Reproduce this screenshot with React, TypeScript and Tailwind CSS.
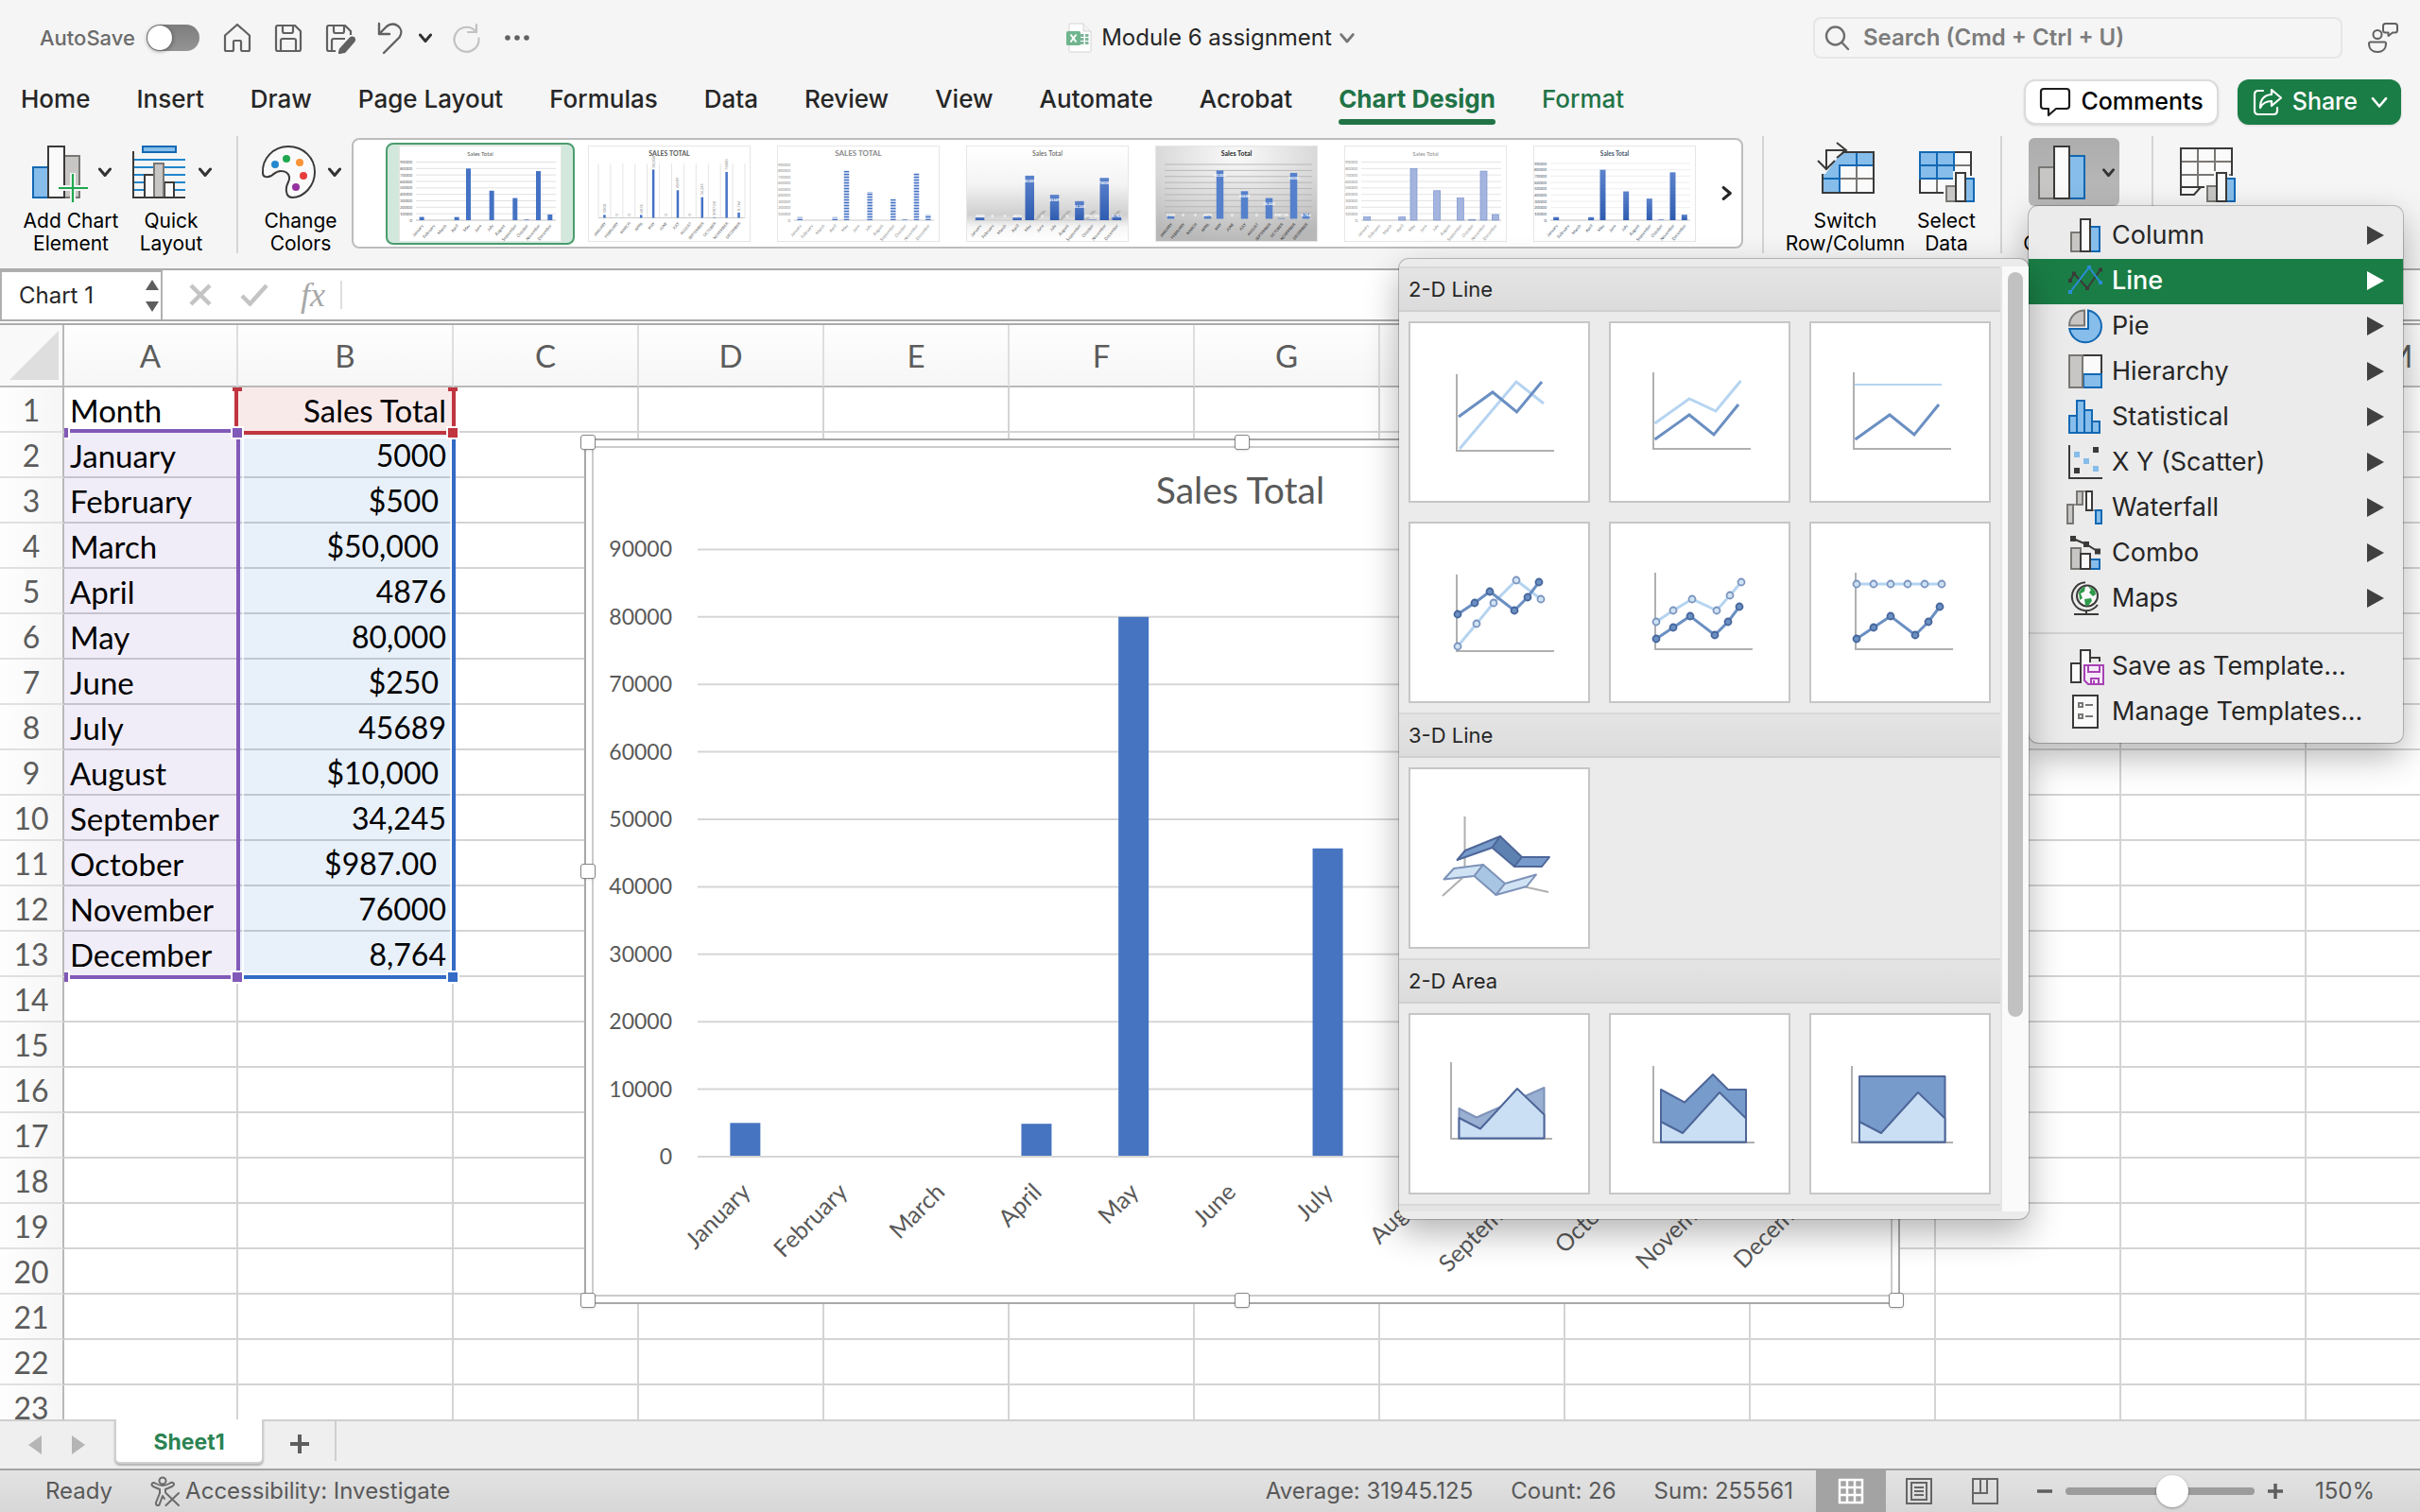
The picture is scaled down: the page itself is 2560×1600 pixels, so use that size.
import { ReactNode, useState } from "react";

const months = [
  "January",
  "February",
  "March",
  "April",
  "May",
  "June",
  "July",
  "August",
  "September",
  "October",
  "November",
  "December",
];

const totals = [
  { text: "5000", pad: "pr-1.5" },
  { text: "$500", pad: "pr-3.5" },
  { text: "$50,000", pad: "pr-3.5" },
  { text: "4876", pad: "pr-1.5" },
  { text: "80,000", pad: "pr-1.5" },
  { text: "$250", pad: "pr-3.5" },
  { text: "45689", pad: "pr-1.5" },
  { text: "$10,000", pad: "pr-3.5" },
  { text: "34,245", pad: "pr-1.5" },
  { text: "$987.00", pad: "pr-4" },
  { text: "76000", pad: "pr-1.5" },
  { text: "8,764", pad: "pr-1.5" },
];

// Text cells count as zero in the chart
const plotted = [5000, 0, 0, 4876, 80000, 0, 45689, 0, 34245, 987, 76000, 8764];

const columns = [
  { name: "A", width: "w-[184px]" },
  { name: "B", width: "w-[228px]" },
  { name: "C", width: "w-[196px]" },
  { name: "D", width: "w-[196px]" },
  { name: "E", width: "w-[196px]" },
  { name: "F", width: "w-[196px]" },
  { name: "G", width: "w-[196px]" },
  { name: "H", width: "w-[196px]" },
  { name: "I", width: "w-[196px]" },
  { name: "J", width: "w-[196px]" },
  { name: "K", width: "w-[196px]" },
  { name: "L", width: "w-[196px]" },
  { name: "M", width: "w-[196px]" },
];

const INK = "#3b3a39";
const BLUE = "#1268b3";
const SKY = "#86bdea";
const GRAY = "#797774";
const SILVER = "#c8c6c4";

function Chevron({ className = "", size = 14, width = 3 }: { className?: string; size?: number; width?: number }) {
  return (
    <svg className={className} width={size} height={size} viewBox="0 0 14 14" fill="none" stroke="currentColor" strokeWidth={width}>
      <path d="M1.5 4 7 10.5 12.5 4" strokeLinejoin="round" strokeLinecap="round" />
    </svg>
  );
}

/* ---------- title bar ---------- */

function IconButton({ label, children, className = "" }: { label: string; children: ReactNode; className?: string }) {
  return (
    <button aria-label={label} className={`flex shrink-0 items-center text-[#616161] ${className}`}>
      {children}
    </button>
  );
}

function TitleBar() {
  const [autoSave, setAutoSave] = useState(false);

  return (
    <div className="grid h-20 grid-cols-[1fr_auto_1fr] items-center">
      <div className="flex items-center pl-[42px]">
        <label className="flex items-center gap-3 text-[22px] font-medium text-[#6b6b6b]">
          AutoSave
          <input
            type="checkbox"
            role="switch"
            checked={autoSave}
            onChange={(e) => setAutoSave(e.target.checked)}
            className="h-7 w-14 appearance-none rounded-full bg-linear-to-b from-[#7d7d7d] to-[#949494] p-px before:block before:size-[26px] before:rounded-full before:bg-white before:shadow-[0_1px_4px_rgba(0,0,0,0.5)]"
          />
        </label>
        <IconButton label="Home" className="ml-6">
          <svg width="32" height="34" viewBox="0 0 32 34" fill="none" stroke="currentColor" strokeWidth="2.2" strokeLinejoin="round">
            <path d="M16 3 3 14.500V29.500Q3 31 4.500 31H10.500Q12 31 12 29.500V21Q12 20 13 20H19Q20 20 20 21V29.500Q20 31 21.500 31H27.500Q29 31 29 29.500V14.500Z" />
          </svg>
        </IconButton>
        <IconButton label="Save" className="ml-[22px]">
          <svg width="32" height="34" viewBox="0 0 32 34" fill="none" stroke="currentColor" strokeWidth="2.200" strokeLinejoin="round">
            <path d="M5 4H23L29 10V29Q29 31 27 31H5Q3 31 3 29V6Q3 4 5 4Z" />
            <path d="M10 4V10Q10 12 12 12H19Q21 12 21 10V4M8 31V20Q8 18 10 18H22Q24 18 24 20V31" />
          </svg>
        </IconButton>
        <IconButton label="Save as" className="ml-[22px]">
          <svg width="34" height="34" viewBox="0 0 34 34" fill="none" stroke="currentColor" strokeWidth="2.200" strokeLinejoin="round">
            <path d="M12 31H5Q3 31 3 29V6Q3 4 5 4H22L28 10V14M10 4V10Q10 12 12 12H19Q21 12 21 10V4M8 31V20Q8 18 10 18H22" />
            <path d="M17 29 27.500 17.500A2.500 2.500 0 0 1 31.500 20.500L21.500 32 16 33Z" fill="currentColor" />
          </svg>
        </IconButton>
        <IconButton label="Undo" className="ml-5">
          <svg width="34" height="36" viewBox="0 0 34 36" fill="none" stroke="currentColor" strokeWidth="2.400" strokeLinecap="round" strokeLinejoin="round">
            <path d="M4 3V14H15M4 14 12 6C20-1 32 8 25.500 17.500L9 34" />
          </svg>
        </IconButton>
        <IconButton label="Undo history" className="ml-3">
          <Chevron className="text-[#333]" />
        </IconButton>
        <IconButton label="Redo" className="ml-5 text-[#c2c2c2]!">
          <svg width="32" height="34" viewBox="0 0 32 34" fill="none" stroke="currentColor" strokeWidth="2.200" strokeLinecap="round" strokeLinejoin="round">
            <path d="M27 3V11H18M27 11A13 13 0 1 0 29.500 17.500" />
          </svg>
        </IconButton>
        <IconButton label="More commands" className="ml-6">
          <svg width="28" height="8" viewBox="0 0 28 8" fill="currentColor">
            <circle cx="4" cy="4" r="2.800" />
            <circle cx="14" cy="4" r="2.800" />
            <circle cx="24" cy="4" r="2.800" />
          </svg>
        </IconButton>
      </div>

      <button className="flex items-center gap-2 text-[24px] text-[#262626]">
        <svg width="30" height="32" viewBox="0 0 30 32">
          <path d="M4 1H19L27 9V30Q27 31 26 31H5Q4 31 4 30Z" fill="#fff" stroke="#d4d4d4" />
          <path d="M19 1V9H27" fill="#f2f2f2" stroke="#d4d4d4" />
          <g fill="#7fb79a">
            <rect x="16" y="12" width="3.500" height="3" />
            <rect x="21" y="12" width="3.500" height="3" />
            <rect x="16" y="16" width="3.500" height="3" />
            <rect x="21" y="16" width="3.500" height="3" />
            <rect x="16" y="20" width="3.500" height="3" />
            <rect x="21" y="20" width="3.500" height="3" />
          </g>
          <rect x="1" y="9" width="15" height="15" rx="1.500" fill="#6fb58e" />
          <path d="M5.500 12.500 11.500 20.500M11.500 12.500 5.500 20.500" stroke="#fff" strokeWidth="2" />
        </svg>
        Module 6 assignment
        <Chevron className="text-[#777]" size={16} width={2.5} />
      </button>

      <div className="flex items-center justify-end gap-[26px] pr-[22px]">
        <label className="flex h-11 w-[560px] items-center gap-3.5 rounded-lg border-2 border-[#e6e6e6] px-2.5">
          <svg width="27" height="28" viewBox="0 0 27 28" fill="none" stroke="#6f6f6f" strokeWidth="2.400" strokeLinecap="round">
            <circle cx="11.500" cy="12" r="9.500" />
            <path d="M18.500 19 25 26" />
          </svg>
          <input
            type="search"
            aria-label="Search"
            placeholder="Search (Cmd + Ctrl + U)"
            className="min-w-0 flex-1 bg-transparent text-[24px] font-semibold outline-none placeholder:text-[#7c7c7c]"
          />
        </label>
        <IconButton label="Account">
          <svg width="34" height="34" viewBox="0 0 34 34" fill="none" stroke="currentColor" strokeWidth="2" strokeLinejoin="round">
            <circle cx="11" cy="13.500" r="4.500" />
            <path d="M3.500 21.500H18.500Q20 21.500 20 23C20 29 16 32 11 32S2 29 2 23Q2 21.500 3.500 21.500Z" />
            <path d="M19.500 2H29.500Q32 2 32 4.500V9Q32 11.500 29.500 11.500H27L22.500 15V11.500H19.500Q17 11.500 17 9V4.500Q17 2 19.500 2Z" />
          </svg>
        </IconButton>
      </div>
    </div>
  );
}

/* ---------- ribbon tabs ---------- */

const tabs = [
  "Home",
  "Insert",
  "Draw",
  "Page Layout",
  "Formulas",
  "Data",
  "Review",
  "View",
  "Automate",
  "Acrobat",
];

function TabRow() {
  return (
    <div className="flex h-[60px] items-start justify-between pr-5 pl-[22px]">
      <nav className="flex gap-[49px] pt-2.5 text-[26px] leading-[30px] font-medium text-[#262626]">
        {tabs.map((tab) => (
          <a key={tab} href="#" className="whitespace-nowrap">
            {tab}
          </a>
        ))}
        <a href="#" aria-current="page" className="font-bold whitespace-nowrap text-[#217346]">
          Chart Design
          <span className="mt-1.5 block h-1.5 rounded-full bg-[#217346]" />
        </a>
        <a href="#" className="whitespace-nowrap text-[#217346]">
          Format
        </a>
      </nav>
      <div className="flex gap-5 pt-1 text-[25px] font-medium">
        <button className="flex h-12 items-center gap-2.5 rounded-xl border-2 border-[#dcdcdc] bg-white px-3.5 text-black shadow-sm">
          <svg width="34" height="32" viewBox="0 0 34 32" fill="none" stroke="#1d1d1d" strokeWidth="2.200" strokeLinejoin="round">
            <path d="M5 2H29Q32 2 32 5V20Q32 23 29 23H18L10 30V23H5Q2 23 2 20V5Q2 2 5 2Z" />
          </svg>
          Comments
        </button>
        <button className="flex h-12 items-center gap-2.5 rounded-xl bg-[#1a7d45] px-3.5 text-white shadow-sm">
          <svg width="34" height="32" viewBox="0 0 34 32" fill="none" stroke="#fff" strokeWidth="2.200" strokeLinecap="round" strokeLinejoin="round">
            <path d="M13 4H8Q4 4 4 8V25Q4 29 8 29H24Q28 29 28 25V22" />
            <path d="M22 3 32 11.500 22 20V15C16 15 12.500 17 10 22 10 13 14 8.500 22 8Z" />
          </svg>
          Share
          <Chevron className="ml-1" size={18} width={2} />
        </button>
      </div>
    </div>
  );
}

/* ---------- chart style thumbnails ---------- */

type ThumbStyle = {
  title: string;
  size: number;
  weight: number;
  ink: string;
  bar: string;
  barWidth: number;
  left: number;
  top: number;
  base: number;
  axis?: boolean;
  grid?: string;
  vertical?: boolean;
  values?: string;
  edge?: string;
  bg?: string;
  caps?: boolean;
  shadow?: boolean;
};

const thumbs: ThumbStyle[] = [
  { title: "Sales Total", size: 6, weight: 400, ink: "#595959", bar: "#4472c4", barWidth: 5, left: 18, top: 17.5, base: 79, axis: true, grid: "#dedede" },
  { title: "SALES TOTAL", size: 7, weight: 700, ink: "#595959", bar: "#4472c4", barWidth: 2.5, left: 11, top: 19, base: 76.5, vertical: true, values: "#8a8a8a", caps: true },
  { title: "SALES TOTAL", size: 8, weight: 700, ink: "#8a8a8a", bar: "url(#stripes)", barWidth: 5.5, left: 18, top: 20, base: 79, axis: true },
  { title: "Sales Total", size: 7, weight: 400, ink: "#595959", bar: "url(#deepBar)", barWidth: 9.5, left: 8, top: 26, base: 79, values: "#ffffff", bg: "url(#floor)", shadow: true },
  { title: "Sales Total", size: 7, weight: 700, ink: "#262626", bar: "#5580cb", barWidth: 7.5, left: 10, top: 20, base: 77.5, grid: "#b3b3b3", values: "#ffffff", bg: "url(#spot)", caps: true },
  { title: "Sales Total", size: 6, weight: 400, ink: "#8c8c8c", bar: "#a3b4de", edge: "#7b94cf", barWidth: 7, left: 18, top: 17.5, base: 79, axis: true, grid: "#e2e2e2" },
  { title: "Sales Total", size: 6.5, weight: 700, ink: "#44546a", bar: "url(#deepBar)", barWidth: 6, left: 18, top: 19, base: 79, axis: true, grid: "#ececf2" },
];

const valueLabels = ["5000", "0", "0", "4876", "80,000", "0", "45689", "0", "34,245", "$987.00", "76000", "8,764"];

function Thumb({ style: s }: { style: ThumbStyle }) {
  const right = 166;
  const step = (right - s.left) / 12;
  const unit = (s.base - s.top) / 90000;
  const lines = Array.from({ length: 10 }, (_, i) => s.top + ((s.base - s.top) / 9) * i);

  return (
    <svg width="172" height="102" viewBox="0 0 172 102" fontFamily="Lato, sans-serif">
      <defs>
        <pattern id="stripes" width="4" height="3" patternUnits="userSpaceOnUse">
          <rect width="4" height="1.500" fill="#4472c4" />
          <rect y="1.500" width="4" height="1.500" fill="#c3d0ec" />
        </pattern>
        <linearGradient id="deepBar" x2="0" y2="1">
          <stop offset="0" stopColor="#5b82cc" />
          <stop offset="1" stopColor="#2f5cb0" />
        </linearGradient>
        <linearGradient id="floor" x2="0" y2="1">
          <stop offset="0" stopColor="#fff" />
          <stop offset="0.400" stopColor="#f4f4f4" />
          <stop offset="0.720" stopColor="#cfcfcf" />
          <stop offset="0.850" stopColor="#f6f6f6" />
          <stop offset="1" stopColor="#fff" />
        </linearGradient>
        <radialGradient id="spot" cx="0.500" cy="0.100" r="0.900">
          <stop offset="0" stopColor="#fafafa" />
          <stop offset="0.600" stopColor="#d6d6d6" />
          <stop offset="1" stopColor="#b8b8b8" />
        </radialGradient>
      </defs>
      <rect x="0.500" y="0.500" width="171" height="101" fill={s.bg ?? "#fff"} stroke="#e6e6e6" />
      <text x="86" y="11" textAnchor="middle" fontSize={s.size} fontWeight={s.weight} fill={s.ink}>
        {s.title}
      </text>
      {s.grid && lines.map((y) => <path key={y} d={`M${s.left} ${y}H${right}`} stroke={s.grid} strokeWidth="0.900" />)}
      {s.vertical &&
        Array.from({ length: 13 }, (_, i) => (
          <path key={i} d={`M${s.left + step * i} ${s.top}V${s.base}`} stroke="#dedede" strokeWidth="0.800" />
        ))}
      <path d={`M${s.left} ${s.base}H${right}`} stroke="#c9c9c9" strokeWidth="1" />
      {s.axis &&
        lines.map((y, i) => (
          <text key={y} x={s.left - 4} y={y + 1.5} textAnchor="end" fontSize="4.500" fill={s.ink}>
            {i === 9 ? "0" : `${9 - i}0000`}
          </text>
        ))}
      {plotted.map((value, i) => {
        const x = s.left + step * (i + 0.5);
        const y = s.base - value * unit;
        return (
          <g key={months[i]}>
            {s.shadow && value > 30000 && <path d={`M${x + 4} ${s.base}l10-10h4l-10 10Z`} fill="#8d8d8d" opacity="0.400" />}
            <rect x={x - s.barWidth / 2} y={y} width={s.barWidth} height={s.base - y} fill={s.bar} stroke={s.edge} strokeWidth="0.700" />
            {s.values && s.vertical && (
              <text transform={`translate(${x + 1.5} ${y - 2}) rotate(-90)`} fontSize="4" fill={s.values}>
                {valueLabels[i]}
              </text>
            )}
            {s.values && !s.vertical && (
              <text x={x} y={value > 10000 ? y + 7 : s.base - 3} textAnchor="middle" fontSize="4" fontWeight="700" fill={s.values}>
                {valueLabels[i]}
              </text>
            )}
            <text transform={`translate(${x + 2} ${s.base + 6}) rotate(-50)`} textAnchor="end" fontSize={s.caps ? 4 : 4.5} fill={s.ink}>
              {s.caps ? months[i].toUpperCase() : months[i]}
            </text>
          </g>
        );
      })}
    </svg>
  );
}

function StyleGallery() {
  return (
    <div className="mt-1.5 flex h-[117px] min-w-0 flex-1 items-center justify-between rounded-lg border-2 border-[#bdbdbd] bg-white pl-[34px]">
      <div className="flex min-w-0 overflow-hidden">
        {thumbs.map((style, i) => (
          <button
            key={i}
            aria-label={`Style ${i + 1}`}
            className={`flex h-[108px] w-[200px] shrink-0 items-center justify-center rounded-lg ${
              i === 0 ? "border-2 border-[#4a9d6e] bg-[#d3e8dc]" : ""
            }`}
          >
            <Thumb style={style} />
          </button>
        ))}
      </div>
      <button aria-label="More styles" className="px-2 text-[#262626]">
        <Chevron className="-rotate-90" size={15} width={3} />
      </button>
    </div>
  );
}

/* ---------- chart type menu ---------- */

function MenuIcon({ children }: { children: ReactNode }) {
  return (
    <svg className="shrink-0 overflow-visible" width="36" height="36" viewBox="0 0 36 36" fill="none" strokeWidth="2">
      {children}
    </svg>
  );
}

function Squares({ points, size, fill }: { points: number[][]; size: number; fill: string }) {
  return points.map(([x, y]) => <rect key={`${x},${y}`} x={x - size / 2} y={y - size / 2} width={size} height={size} fill={fill} />);
}

const chartTypes: { name: string; icon: ReactNode }[] = [
  {
    name: "Column",
    icon: (
      <>
        <rect x="3" y="15" width="10" height="20" fill={SILVER} stroke={GRAY} />
        <rect x="23" y="9" width="10" height="26" fill={SKY} stroke={BLUE} />
        <rect x="13" y="1" width="10" height="34" fill="#fafafa" stroke={INK} />
      </>
    ),
  },
  {
    name: "Line",
    icon: (
      <>
        <path d="M2 18 6 10.500 20 26 34 6.500" stroke={INK} />
        <path d="M2 30 22 4 34 20" stroke="#2a8dd4" />
        <Squares points={[[2, 18], [6, 10.5], [20, 26], [34, 6.5]]} size={4} fill={INK} />
        <Squares points={[[2, 30], [22, 4], [34, 20]]} size={4} fill="#2a8dd4" />
      </>
    ),
  },
  {
    name: "Pie",
    icon: (
      <>
        <path d="M17 1.500V17.500H1C1 8.500 8 1.500 17 1.500Z" fill={SILVER} stroke={GRAY} />
        <path d="M21 1.500A17 17 0 1 1 1.200 21H21Z" fill={SKY} stroke={BLUE} />
      </>
    ),
  },
  {
    name: "Hierarchy",
    icon: (
      <>
        <rect x="15" y="1" width="20" height="34" fill="#fafafa" stroke={INK} />
        <rect x="16" y="21" width="19" height="14" fill={SKY} stroke={BLUE} />
        <rect x="1" y="1" width="14" height="34" fill={SILVER} stroke={GRAY} />
      </>
    ),
  },
  {
    name: "Statistical",
    icon: (
      <g fill={SKY} stroke={BLUE}>
        <rect x="1" y="17" width="8" height="18" />
        <rect x="9" y="1" width="8" height="34" />
        <rect x="17" y="11" width="8" height="24" />
        <rect x="25" y="23" width="8" height="12" />
      </g>
    ),
  },
  {
    name: "X Y (Scatter)",
    icon: (
      <>
        <path d="M1 0V35H36" stroke={INK} />
        <Squares points={[[9, 10], [19, 17], [29, 25]]} size={6} fill={SKY} />
        <Squares points={[[29, 5], [9, 27]]} size={6} fill={INK} />
      </>
    ),
  },
  {
    name: "Waterfall",
    icon: (
      <>
        <path d="M5 15H9M25 21H29M15 1H19" stroke={INK} strokeWidth="1" />
        <rect x="-1" y="15" width="6" height="20" fill={SILVER} stroke={GRAY} />
        <rect x="9" y="1" width="6" height="14" fill={SILVER} stroke={GRAY} />
        <rect x="19" y="1" width="6" height="20" fill="#fafafa" stroke={INK} />
        <rect x="29" y="21" width="6" height="14" fill={SKY} stroke={BLUE} />
      </>
    ),
  },
  {
    name: "Combo",
    icon: (
      <>
        <rect x="3" y="13" width="10" height="22" fill={SILVER} stroke={GRAY} />
        <rect x="23" y="25" width="10" height="10" fill={SKY} stroke={BLUE} />
        <rect x="13" y="19" width="10" height="16" fill="#fafafa" stroke={INK} />
        <path d="M5 3 19 9 31 16.500" stroke={INK} />
        <Squares points={[[5, 3], [19, 9], [31, 16.5]]} size={6} fill={INK} />
      </>
    ),
  },
  {
    name: "Maps",
    icon: (
      <>
        <circle cx="20" cy="15.500" r="11" fill="#fafafa" stroke={INK} />
        <path d="M11 12Q14 6 18 6L17 11 13 13 15 18 12 20ZM21 6Q28 6 29 14L26 16 22 12 24 9ZM17 19 24 18 25 21 21 26H18Z" fill="#2f9a4b" />
        <path d="M18 1.200A15 15 0 1 0 31 25M19 31V35M6 35H32" stroke={INK} />
      </>
    ),
  },
];

const templateItems: { name: string; icon: ReactNode }[] = [
  {
    name: "Save as Template...",
    icon: (
      <>
        <rect x="3" y="15" width="10" height="20" fill="#fafafa" stroke={INK} />
        <path d="M13 35V1H23V14M23 9H33V13" fill="none" stroke={INK} />
        <rect x="14" y="2" width="8" height="14" fill="#fafafa" />
        <path d="M17 17H37V37H21L17 33Z" fill="#f6eaf8" stroke="#a742b5" />
        <path d="M21 17V24H33V17M24 37V31H32V37M27 33V36" stroke="#a742b5" />
      </>
    ),
  },
  {
    name: "Manage Templates...",
    icon: (
      <>
        <rect x="5" y="1" width="26" height="34" fill="#fafafa" stroke={INK} />
        <path d="M11 9H15V13H11ZM11 21H15V25H11ZM18 11H26M18 23H26" stroke={GRAY} />
      </>
    ),
  },
];

const DARK_LINE = "#6a8fc2";
const PALE_LINE = "#b5d4f1";
const EDGE = "#4e6699";

function Axis({ x, top, bottom, right }: { x: number; top: number; bottom: number; right: number }) {
  return <path d={`M${x} ${top}V${bottom}H${right}`} stroke="#b0b0b0" strokeWidth="2" />;
}

function Series({ points, tone, dots = false }: { points: number[][]; tone: "dark" | "pale"; dots?: boolean }) {
  const line = points.map((p) => p.join(",")).join(" ");
  return (
    <g>
      <polyline points={line} stroke={tone === "dark" ? DARK_LINE : PALE_LINE} strokeWidth="3" />
      {dots &&
        points.map(([x, y]) => (
          <circle key={x} cx={x} cy={y} r="3.500" fill={tone === "dark" ? DARK_LINE : "#cfe3f6"} stroke={tone === "dark" ? "#46669c" : "#7b94bd"} strokeWidth="1.800" />
        ))}
    </g>
  );
}

const lowLine = [[48.5, 125], [85, 99], [111, 120], [137, 88]];
const lowDots = [[50, 124], [68, 112], [86, 100], [112, 120], [126, 106], [138, 90]];

const sections: { title: string; tiles: { name: string; art: ReactNode }[] }[] = [
  {
    title: "2-D Line",
    tiles: [
      {
        name: "Line",
        art: (
          <>
            <Axis x={51} top={56} bottom={137} right={154} />
            <Series tone="pale" points={[[54, 135], [114, 64], [143, 87]]} />
            <Series tone="dark" points={[[53, 101], [89, 75], [114.5, 96], [141, 64]]} />
          </>
        ),
      },
      {
        name: "Stacked line",
        art: (
          <>
            <Axis x={47} top={54} bottom={135} right={150} />
            <Series tone="pale" points={[[48.5, 108], [85, 82], [113, 95], [139.5, 63]]} />
            <Series tone="dark" points={lowLine} />
          </>
        ),
      },
      {
        name: "100% stacked line",
        art: (
          <>
            <Axis x={47} top={54} bottom={135} right={150} />
            <path d="M48 67H140" stroke={PALE_LINE} strokeWidth="2" />
            <Series tone="dark" points={lowLine} />
          </>
        ),
      },
      {
        name: "Line with markers",
        art: (
          <>
            <Axis x={51} top={56} bottom={137} right={154} />
            <Series dots tone="pale" points={[[52, 132], [72, 108], [90, 86], [114, 62], [140, 82]]} />
            <Series dots tone="dark" points={[[52, 98], [70, 86], [86, 74], [112, 94], [126, 80], [138, 64]]} />
          </>
        ),
      },
      {
        name: "Stacked line with markers",
        art: (
          <>
            <Axis x={49} top={54} bottom={135} right={152} />
            <Series dots tone="pale" points={[[50, 106], [68, 94], [88, 82], [114, 94], [128, 78], [140, 64]]} />
            <Series dots tone="dark" points={lowDots} />
          </>
        ),
      },
      {
        name: "100% stacked line with markers",
        art: (
          <>
            <Axis x={49} top={54} bottom={135} right={152} />
            <Series dots tone="pale" points={[[50, 66], [68, 66], [86, 66], [104, 66], [122, 66], [140, 66]]} />
            <Series dots tone="dark" points={lowDots} />
          </>
        ),
      },
    ],
  },
  {
    title: "3-D Line",
    tiles: [
      {
        name: "3-D line",
        art: (
          <g strokeWidth="2" strokeLinejoin="round">
            <path d="M59.500 52V106M57 117 36 136M121 126 148 132" stroke="#b0b0b0" />
            <path d="M51.500 98 60 88 97 73 88.500 85Z" fill="#779bca" stroke={EDGE} />
            <path d="M97 73 120 95 112 105 88.500 85Z" fill="#5d82b1" stroke={EDGE} />
            <path d="M120 95H149L141 105H112Z" fill="#779bca" stroke={EDGE} />
            <path d="M37.500 118.500 48 107 79 103 69.500 115Z" fill="#d0e3f4" stroke="#7d92b8" />
            <path d="M79 103 102 123 92.500 135 69.500 115Z" fill="#a9c5e4" stroke="#7d92b8" />
            <path d="M102 123 135 113.500 125 126 92.500 135Z" fill="#d0e3f4" stroke="#7d92b8" />
          </g>
        ),
      },
    ],
  },
  {
    title: "2-D Area",
    tiles: [
      {
        name: "Area",
        art: (
          <g strokeWidth="2" strokeLinejoin="round">
            <Axis x={45} top={52} bottom={133} right={152} />
            <path d="M53.500 101 72 110.500 97 99.500 143.500 79V132.500H53.500Z" fill="#9ab0d2" stroke="#7d92b8" />
            <path d="M53.500 111 76 122.500 115 80 143.500 107.500V132.500H53.500Z" fill="#cbdff4" stroke={EDGE} />
          </g>
        ),
      },
      {
        name: "Stacked area",
        art: (
          <g strokeWidth="2" strokeLinejoin="round">
            <Axis x={47} top={56} bottom={137} right={154} />
            <path d="M55 81 80 94.500 110 65 126 81H145V136.500H55Z" fill="#779bca" stroke={EDGE} />
            <path d="M55 115 78 127 117 84 145 111.500V136.500H55Z" fill="#cbdff4" stroke={EDGE} />
          </g>
        ),
      },
      {
        name: "100% stacked area",
        art: (
          <g strokeWidth="2" strokeLinejoin="round">
            <Axis x={45} top={56} bottom={137} right={152} />
            <path d="M53 67H143.500V136.500H53Z" fill="#779bca" stroke={EDGE} />
            <path d="M53 115 76 127 115 84 143.500 111.500V136.500H53Z" fill="#cbdff4" stroke={EDGE} />
          </g>
        ),
      },
    ],
  },
];

function LineGallery() {
  return (
    <div className="absolute top-0 right-full flex h-[1016px] w-[666px] rounded-[10px] bg-[#ebebeb] py-2 shadow-[0_0_0_1px_rgba(0,0,0,0.22),0_14px_36px_rgba(0,0,0,0.3)]">
      <div className="min-w-0 flex-1 overflow-hidden">
        {sections.map((section) => (
          <section key={section.title}>
            <h3 className="flex h-12 items-center border-y-2 border-t-[#d8d8d8] border-b-[#cfcfcf] bg-linear-to-b from-[#e4e4e4] to-[#dcdcdc] px-2.5 text-[22px] font-normal text-[#262626]">
              {section.title}
            </h3>
            <div className="grid grid-cols-3 gap-5 p-2.5">
              {section.tiles.map((tile) => (
                <button key={tile.name} aria-label={tile.name} className="aspect-square border-2 border-[#c6c6c6] bg-white">
                  <svg className="size-full" viewBox="2 2 188 188" fill="none">
                    {tile.art}
                  </svg>
                </button>
              ))}
            </div>
          </section>
        ))}
        <div className="h-12 border-t-2 border-[#d8d8d8] bg-[#e4e4e4]" />
      </div>
      <div className="w-[30px] border-l-2 border-[#e4e4e4] bg-[#fafafa] py-1.5 pl-1.5">
        <div className="h-[788px] w-4 rounded-full bg-[#c1c1c1]" />
      </div>
    </div>
  );
}

function ChartTypeMenu() {
  return (
    <div className="absolute top-full left-0 w-[396px] rounded-[10px] bg-[#ebebeb] py-2 text-[27px] text-[#262626] shadow-[0_0_0_1px_rgba(0,0,0,0.22),0_14px_36px_rgba(0,0,0,0.3)]">
      {chartTypes.map((type) => {
        const active = type.name === "Line";
        return (
          <div key={type.name} className="relative">
            <button
              className={`flex h-12 w-full items-center gap-2.5 pr-5 pb-0.5 pl-[42px] text-left ${
                active ? "bg-[#1a7d45] font-medium text-white" : ""
              }`}
            >
              <MenuIcon>{type.icon}</MenuIcon>
              <span className="flex-1">{type.name}</span>
              <svg width="18" height="20" viewBox="0 0 18 20" className={active ? "fill-white" : "fill-[#404040]"}>
                <path d="M0 0 18 10 0 20Z" />
              </svg>
            </button>
            {active && <LineGallery />}
          </div>
        );
      })}
      <hr className="my-[11px] border-t-2 border-[#d2d2d2]" />
      {templateItems.map((item) => (
        <button key={item.name} className="flex h-12 w-full items-center gap-2.5 pb-0.5 pl-[42px] text-left">
          <MenuIcon>{item.icon}</MenuIcon>
          {item.name}
        </button>
      ))}
    </div>
  );
}

/* ---------- ribbon ---------- */

function RibbonButton({ icon, lines, arrow = false, className = "" }: { icon: ReactNode; lines: string[]; arrow?: boolean; className?: string }) {
  return (
    <button className={`flex shrink-0 flex-col items-center pt-2.5 text-[21px] leading-6 text-black ${className}`}>
      <span className="mb-2 flex h-16 items-center gap-2.5">
        <svg width="62" height="64" viewBox="0 0 62 64" fill="none" strokeWidth="2">
          {icon}
        </svg>
        {arrow && <Chevron className="text-[#333]" />}
      </span>
      {lines.map((line) => (
        <span key={line} className="block whitespace-nowrap">
          {line}
        </span>
      ))}
    </button>
  );
}

function Separator({ className = "" }: { className?: string }) {
  return <div className={`mt-1 h-[124px] w-0.5 shrink-0 bg-[#d4d4d4] ${className}`} />;
}

function SmallBars() {
  return (
    <>
      <path d="M28 44H38V31H54V36H62V64H28Z" fill="#f5f5f5" />
      <rect x="31" y="47" width="10" height="16" fill={SILVER} stroke={GRAY} />
      <rect x="51" y="39" width="9" height="24" fill={SKY} stroke={BLUE} />
      <rect x="41" y="33" width="10" height="30" fill="#fafafa" stroke={INK} />
    </>
  );
}

function Ribbon() {
  return (
    <div className="relative z-10 flex h-36 items-start pl-[22px]">
      <RibbonButton
        arrow
        className="w-[106px]"
        lines={["Add Chart", "Element"]}
        icon={
          <>
            <rect x="3" y="27" width="16" height="32" fill={SKY} stroke={BLUE} />
            <rect x="36" y="15" width="16" height="44" fill={SILVER} stroke={GRAY} />
            <rect x="19" y="5" width="17" height="54" fill="#fafafa" stroke={INK} />
            <path d="M45 33V64M29 49H61" stroke="#f5f5f5" strokeWidth="6" />
            <path d="M45 34V64M30 49H61" stroke="#1fa84f" strokeWidth="2.200" />
          </>
        }
      />
      <RibbonButton
        arrow
        className="w-[106px]"
        lines={["Quick", "Layout"]}
        icon={
          <>
            <rect x="13" y="5" width="35" height="6" fill={SKY} stroke={BLUE} />
            <path d="M4 19H58M4 27H58M4 35H58M4 43H58M4 51H58" stroke="#1f86cc" />
            <rect x="15" y="35" width="10" height="24" fill="#fafafa" stroke={INK} />
            <rect x="36" y="43" width="10" height="16" fill="#fafafa" stroke={INK} />
            <rect x="25" y="23" width="10" height="36" fill={SILVER} stroke={GRAY} />
            <path d="M3 10V59H58" stroke={INK} />
          </>
        }
      />
      <Separator className="ml-4" />
      <RibbonButton
        arrow
        className="ml-3 w-[108px]"
        lines={["Change", "Colors"]}
        icon={
          <>
            <path d="M3 33C2 18 14 5 30 5 46 5 58 17 58 32 58 46 47 59 34 59 29 59 27 54 28 48 29 43 32 41 31 37 30 33 26 31 22 31 17 31 15 34 12 36 8 38 3 38 3 33Z" fill="#fafafa" stroke={INK} />
            <circle cx="16" cy="24" r="4" fill="#2488cc" />
            <circle cx="28" cy="18" r="4" fill="#1fa84f" />
            <circle cx="42" cy="22" r="4" fill="#fb9438" />
            <circle cx="46" cy="36" r="4" fill="#e83c3c" />
            <circle cx="38" cy="48" r="4" fill="#96309e" />
          </>
        }
      />
      <StyleGallery />
      <Separator className="ml-5" />
      <RibbonButton
        className="ml-6 w-[124px]"
        lines={["Switch", "Row/Column"]}
        icon={
          <>
            <rect x="7" y="11" width="54" height="43" fill="#fafafa" />
            <rect x="7" y="11" width="54" height="14" fill={SKY} />
            <rect x="7" y="11" width="18" height="43" fill={SKY} />
            <path d="M43 25V54M25 39H61" stroke={GRAY} />
            <path d="M43 11V25M7 39H25M25 54V25H61" stroke={BLUE} />
            <path d="M7 11H61V54H7Z" stroke={INK} />
            <path d="M0 0H36L10 34H0Z" fill="#f5f5f5" />
            <path d="M11 28V9H31M22 1 32 9 22 17M2 20 11 29 20 20" stroke={INK} />
          </>
        }
      />
      <RibbonButton
        className="w-[90px]"
        lines={["Select", "Data"]}
        icon={
          <>
            <rect x="3" y="11" width="54" height="43" fill="#fafafa" />
            <path d="M39 25H57M21 39V54" stroke={GRAY} />
            <path d="M3 11H57V54H3Z" stroke={INK} />
            <rect x="3" y="11" width="36" height="28" fill={SKY} stroke={BLUE} />
            <path d="M21 11V39M3 25H39" stroke={BLUE} />
            <SmallBars />
          </>
        }
      />
      <Separator className="ml-3" />
      <div className="relative ml-7 w-[98px] shrink-0 pt-1.5">
        <div className="relative">
          <button
            aria-haspopup="menu"
            aria-expanded="true"
            aria-label="Change chart type"
            className="flex h-[72px] w-24 items-center gap-4 rounded-md bg-linear-to-b from-[#adadad] to-[#bababa] pl-2.5"
          >
            <svg width="52" height="58" viewBox="0 0 52 58" fill="none" strokeWidth="2">
              <rect x="1" y="24" width="16" height="33" fill={SILVER} stroke={GRAY} />
              <rect x="33" y="12" width="16" height="45" fill={SKY} stroke={BLUE} />
              <rect x="17" y="2" width="16" height="55" fill="#fafafa" stroke={INK} />
            </svg>
            <Chevron className="text-[#333]" size={13} />
          </button>
          <ChartTypeMenu />
        </div>
        <div className="-mx-2 mt-1 text-center text-[21px] leading-6 whitespace-nowrap text-black">
          Change
          <br />
          Chart Type
        </div>
      </div>
      <Separator className="ml-8" />
      <button aria-label="Move chart" className="mr-[194px] ml-[26px] shrink-0 pt-2.5">
        <svg width="62" height="64" viewBox="0 0 62 64" fill="none" strokeWidth="2">
          <path d="M3 7H57V48H24L18 56H3Z" fill="#fafafa" />
          <path d="M21 7V48M39 7V48M3 21H57M3 35H57" stroke={GRAY} />
          <path d="M57 48V7H3V56H17L24 48M3 48H32" stroke={INK} />
          <SmallBars />
        </svg>
      </button>
    </div>
  );
}

/* ---------- formula bar ---------- */

function FormulaBar() {
  return (
    <div className="flex h-[60px] border-t-2 border-b-[6px] border-double border-[#ababab] bg-white text-[#c4c4c4]">
      <div className="flex h-full w-[172px] items-center border-2 border-b-0 border-[#b0b0b0] pr-0.5 pl-[18px]">
        <input aria-label="Name box" defaultValue="Chart 1" className="w-full min-w-0 text-[24px] text-[#262626] outline-none" />
        <svg className="shrink-0" width="14" height="36" viewBox="0 0 14 36" fill="#5e5e5e">
          <path d="M7 1 14 12H0ZM7 35 14 24H0Z" />
        </svg>
      </div>
      <div className="flex flex-1 items-center pl-7">
        <button aria-label="Cancel">
          <svg width="24" height="24" viewBox="0 0 24 24" stroke="currentColor" strokeWidth="4.500">
            <path d="M2 2 22 22M22 2 2 22" />
          </svg>
        </button>
        <button aria-label="Enter" className="ml-[30px]">
          <svg width="30" height="24" viewBox="0 0 30 24" fill="none" stroke="currentColor" strokeWidth="4.500">
            <path d="M2 13 10.500 21.500 28 2" />
          </svg>
        </button>
        <button aria-label="Insert function" className="ml-[34px] font-[family-name:'Liberation_Serif',serif] text-[36px] leading-8 text-[#a8a8a8] italic">
          fx
        </button>
        <div className="ml-4 h-[30px] w-0.5 bg-[#dedede]" />
        <input aria-label="Formula" className="h-full min-w-0 flex-1 px-3 text-[24px] text-black outline-none" />
      </div>
    </div>
  );
}

/* ---------- sheet ---------- */

function BigChart() {
  const left = 120;
  const base = 760;
  const step = 102.7;
  const rise = 71.4;

  return (
    <div className="absolute top-[120px] left-[618px] h-[916px] w-[1392px] border-2 border-[#a8a8a8] bg-white p-1.5">
      <div className="size-full border-2 border-[#cbcbcb]" />
      <svg className="absolute -top-0.5 -left-0.5" width="1392" height="916" viewBox="0 0 1392 916" fontFamily="Lato, sans-serif" fill="#595959">
        <text x="694" y="69" textAnchor="middle" fontSize="39">
          Sales Total
        </text>
        {Array.from({ length: 10 }, (_, i) => (
          <g key={i}>
            <path d={`M${left} ${base - rise * i}H${left + step * 12}`} stroke="#d6d6d6" strokeWidth="2" />
            <text x="93" y={base - rise * i + 8} textAnchor="end" fontSize="23">
              {i * 10000}
            </text>
          </g>
        ))}
        {plotted.map((value, i) => {
          const x = left + step * (i + 0.5);
          const height = (value / 10000) * rise;
          return (
            <g key={months[i]}>
              {value > 0 && <rect x={x - 17} y={base - height} width="32" height={height - 1} fill="#4674c1" />}
              <text transform={`translate(${x + 6} ${base + 39}) rotate(-45)`} textAnchor="end" fontSize="25">
                {months[i]}
              </text>
            </g>
          );
        })}
      </svg>
      {[
        "-top-1.5 -left-1.5",
        "-top-1.5 left-1/2 -translate-x-1/2",
        "-top-1.5 -right-1.5",
        "top-1/2 -left-1.5 -translate-y-1/2",
        "top-1/2 -right-1.5 -translate-y-1/2",
        "-bottom-1.5 -left-1.5",
        "-bottom-1.5 left-1/2 -translate-x-1/2",
        "-right-1.5 -bottom-1.5",
      ].map((place) => (
        <span key={place} className={`absolute size-4 rounded-[3px] border border-[#868686] bg-white shadow-sm ${place}`} />
      ))}
    </div>
  );
}

// Coloured frames round the ranges that feed the chart
function RangeFrames() {
  return (
    <div className="pointer-events-none absolute inset-0">
      <div className="absolute top-[114px] left-[252px] h-[578px] w-[230px] border-r-4 border-b-4 border-[#336bc6] outline-2 -outline-offset-6 outline-white/80" />
      <div className="absolute top-[66px] left-[248px] h-[50px] w-[234px] border-4 border-t-0 border-[#c0353f]" />
      <div className="absolute top-[110px] left-[68px] h-[582px] w-[186px] border-4 border-l-0 border-[#8159b8]" />
      <span className="absolute top-[66px] left-[246px] h-1 w-2.5 bg-[#c0353f]" />
      <span className="absolute top-[66px] left-[474px] h-1 w-2.5 bg-[#c0353f]" />
      <span className="absolute top-[107px] left-[472px] size-3.5 border-2 border-white bg-[#c0353f]" />
      <span className="absolute top-[107px] left-[244px] size-3.5 border-2 border-white bg-[#8159b8]" />
      <span className="absolute top-[683px] left-[244px] size-3.5 border-2 border-white bg-[#8159b8]" />
      <span className="absolute top-[683px] left-[472px] size-3.5 border-2 border-white bg-[#336bc6]" />
      <span className="absolute top-[107px] left-[68px] h-3.5 w-1.5 border-2 border-l-0 border-white bg-[#8159b8]" />
      <span className="absolute top-[683px] left-[68px] h-3.5 w-1.5 border-2 border-l-0 border-white bg-[#8159b8]" />
    </div>
  );
}

function cellFor(row: number, column: string) {
  if (column === "A") {
    if (row === 1) return { text: "Month", style: "pl-1.5" };
    if (row <= 13) return { text: months[row - 2], style: "bg-[#f1edf8] border-b-[#c6c3d0]! pl-1.5" };
  }
  if (column === "B") {
    if (row === 1) return { text: "Sales Total", style: "bg-[#f9eaea] pr-1.5 text-right" };
    if (row <= 13) {
      const total = totals[row - 2];
      return { text: total.text, style: `bg-[#e8f0fa] border-b-[#bfc7d3]! text-right text-[32px] ${total.pad}` };
    }
  }
  return { text: "", style: "" };
}

function Sheet() {
  return (
    <div className="relative min-h-0 flex-1 overflow-hidden bg-white font-[family-name:Lato,sans-serif] text-[33px] leading-none">
      <table className="w-max table-fixed border-separate border-spacing-0">
        <colgroup>
          <col className="w-[68px]" />
          {columns.map((column) => (
            <col key={column.name} className={column.width} />
          ))}
        </colgroup>
        <thead>
          <tr className="h-[66px] text-[#5c5c5c]">
            <th aria-label="Select all" className="w-[68px] border-r-2 border-b-2 border-[#b9b9b9] bg-[#f9f9f9] p-0">
              <svg className="ml-2.5" width="52" height="52" viewBox="0 0 52 52">
                <path d="M52 0V52H0Z" fill="#dedede" />
              </svg>
            </th>
            {columns.map((column) => (
              <th
                key={column.name}
                scope="col"
                className={`border-r-2 border-b-2 border-r-[#dedede] border-b-[#b9b9b9] bg-linear-to-b from-[#fefefe] to-[#f6f6f6] p-0 font-normal ${column.width}`}
              >
                {column.name}
              </th>
            ))}
          </tr>
        </thead>
        <tbody>
          {Array.from({ length: 23 }, (_, i) => i + 1).map((row) => (
            <tr key={row} className="h-12">
              <th scope="row" className="border-r-2 border-b-2 border-r-[#b9b9b9] border-b-[#e0e0e0] bg-linear-to-r from-[#fefefe] to-[#f6f6f6] p-0 pt-0.5 text-[32px] font-normal text-[#5c5c5c]">
                {row}
              </th>
              {columns.map((column) => {
                const cell = cellFor(row, column.name);
                return (
                  <td key={column.name} className={`border-r-2 border-b-2 border-[#d4d4d4] p-0 pt-0.5 text-black ${cell.style}`}>
                    {cell.text}
                  </td>
                );
              })}
            </tr>
          ))}
        </tbody>
      </table>
      <RangeFrames />
      <BigChart />
    </div>
  );
}

/* ---------- bottom bars ---------- */

function SheetTabs() {
  return (
    <div className="flex h-[52px] shrink-0 items-start border-t-2 border-[#cfcfcf] bg-[#efefef]">
      <div className="flex h-[50px] w-[121px] items-center gap-8 pl-[30px]">
        <button aria-label="Previous sheet">
          <svg width="14" height="20" viewBox="0 0 14 20" fill="#b5b5b5">
            <path d="M14 0V20L0 10Z" />
          </svg>
        </button>
        <button aria-label="Next sheet">
          <svg width="14" height="20" viewBox="0 0 14 20" fill="#b5b5b5">
            <path d="M0 0V20L14 10Z" />
          </svg>
        </button>
      </div>
      <button className="-mt-0.5 h-[47px] w-[158px] rounded-b-md border-2 border-t-0 border-[#cfcfcf] bg-white pt-1 text-[23px] font-bold text-[#2b8352] shadow-[0_2px_2px_rgba(0,0,0,0.25)]">
        Sheet1
      </button>
      <button aria-label="Add sheet" className="flex h-12 w-[75px] items-center justify-center">
        <svg width="20" height="20" viewBox="0 0 20 20" stroke="#5e5e5e" strokeWidth="4">
          <path d="M10 0V20M0 10H20" />
        </svg>
      </button>
      <div className="h-[42px] w-0.5 bg-[#cfcfcf]" />
    </div>
  );
}

function StatusBar() {
  const [zoom, setZoom] = useState(58);

  return (
    <div className="flex h-[46px] shrink-0 items-center border-t-2 border-[#a3a3a3] bg-linear-to-b from-[#e3e3e3] to-[#d7d7d7] pr-12 pl-12 text-[24px] text-[#595959]">
      <span>Ready</span>
      <button className="ml-10 flex items-center gap-1.5">
        <svg width="31" height="32" viewBox="0 0 31 32" fill="none" stroke="#6b6b6b" strokeWidth="2" strokeLinejoin="round" strokeLinecap="round">
          <circle cx="13" cy="5" r="3.500" />
          <path d="M16 17V14L23 11Q26 9 24.500 7.500T20 8Q13 12 6 8 3 6 1.800 8T4 11.500L10 14V18L6 28Q5.500 30.500 7.500 31T10 29L13 21 15 24" />
          <path d="M16.500 18 30 31M30 18 16.500 31" />
        </svg>
        Accessibility: Investigate
      </button>
      <div className="flex-1" />
      <span>Average: 31945.125</span>
      <span className="ml-10">Count: 26</span>
      <span className="ml-10">Sum: 255561</span>
      <button aria-label="Normal view" className="ml-6 flex h-full w-[74px] items-center justify-center bg-[#a3a3a3]">
        <svg width="28" height="28" viewBox="0 0 28 28" fill="none" stroke="#fff" strokeWidth="2.500">
          <path d="M2 2H26V26H2ZM2 10H26M2 18H26M10 2V26M18 2V26" />
        </svg>
      </button>
      <button aria-label="Page layout view" className="ml-5">
        <svg width="30" height="28" viewBox="0 0 30 28" fill="none" stroke="#666" strokeWidth="2">
          <path d="M2 1H28V27H2ZM7 5H23V23H7ZM10 10H20M10 14H20M10 18H20" />
        </svg>
      </button>
      <button aria-label="Page break view" className="ml-10">
        <svg width="30" height="28" viewBox="0 0 30 28" fill="none" stroke="#666" strokeWidth="2">
          <path d="M2 1H28V27H2ZM2 16H17V1M10 1V16" />
        </svg>
      </button>
      <button aria-label="Zoom out" className="ml-10">
        <svg width="16" height="16" viewBox="0 0 16 16" stroke="#5e5e5e" strokeWidth="3.500">
          <path d="M0 8H16" />
        </svg>
      </button>
      <input
        type="range"
        aria-label="Zoom"
        value={zoom}
        onChange={(e) => setZoom(Number(e.target.value))}
        className="ml-3.5 h-2 w-[200px] appearance-none rounded-full bg-[#9c9c9c] [&::-webkit-slider-thumb]:size-[34px] [&::-webkit-slider-thumb]:appearance-none [&::-webkit-slider-thumb]:rounded-full [&::-webkit-slider-thumb]:bg-white [&::-webkit-slider-thumb]:shadow-[0_1px_3px_rgba(0,0,0,0.35)]"
      />
      <button aria-label="Zoom in" className="ml-3.5">
        <svg width="16" height="16" viewBox="0 0 16 16" stroke="#5e5e5e" strokeWidth="3.500">
          <path d="M0 8H16M8 0V16" />
        </svg>
      </button>
      <span className="ml-[34px]">150%</span>
    </div>
  );
}

export default function App() {
  return (
    <div className="flex h-screen flex-col overflow-hidden bg-[#f5f5f5] font-[family-name:Inter,sans-serif]">
      <TitleBar />
      <TabRow />
      <Ribbon />
      <FormulaBar />
      <Sheet />
      <SheetTabs />
      <StatusBar />
    </div>
  );
}
